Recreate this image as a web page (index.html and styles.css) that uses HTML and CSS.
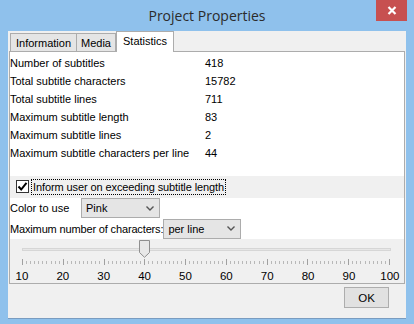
FILE: index.html
```html
<!DOCTYPE html>
<html>
<head>
<meta charset="utf-8">
<link rel="stylesheet" href="styles.css">
</head>
<body>
<div class="window">
  <div class="titlebar">
    <div></div>
    <div class="title">Project Properties</div>
    <div class="caption"><button class="close"><svg width="10" height="9" viewBox="0 0 10 9"><path d="M1.5 1 L8.5 8 M8.5 1 L1.5 8" stroke="#fff" stroke-width="2.2"/></svg></button></div>
  </div>
  <div class="client">
    <div class="tabs">
      <div class="tab">Information</div>
      <div class="tab">Media</div>
      <div class="tab active">Statistics</div>
    </div>
    <div class="panel">
      <div class="stats">
        <div>Number of subtitles</div><div>418</div>
        <div>Total subtitle characters</div><div>15782</div>
        <div>Total subtitle lines</div><div>711</div>
        <div>Maximum subtitle length</div><div>83</div>
        <div>Maximum subtitle lines</div><div>2</div>
        <div>Maximum subtitle characters per line</div><div>44</div>
      </div>
      <div class="checkrow">
        <span class="checkbox"><svg width="11" height="11" viewBox="0 0 11 11"><path d="M1.5 5.5 L4.2 8.5 L9.5 1.8" stroke="#000" stroke-width="2" fill="none"/></svg></span>
        <span class="focus">Inform user on exceeding subtitle length</span>
      </div>
      <div class="formrow">
        <span class="lbl1">Color to use</span>
        <div class="combo c1"><span>Pink</span><svg width="8" height="5" viewBox="0 0 8 5"><path d="M0.5 0.5 L4 4 L7.5 0.5" stroke="#555" stroke-width="1.4" fill="none"/></svg></div>
      </div>
      <div class="formrow r2">
        <span class="lbl2">Maximum number of characters:</span>
        <div class="combo c2"><span>per line</span><svg width="8" height="5" viewBox="0 0 8 5"><path d="M0.5 0.5 L4 4 L7.5 0.5" stroke="#555" stroke-width="1.4" fill="none"/></svg></div>
      </div>
      <div class="slider">
        <div class="track">
          <div class="rail"></div>
          <svg class="thumb" style="left:129px" width="11" height="18" viewBox="0 0 11 18"><path d="M0.5 0.5 H10.5 V12.5 L5.5 17.3 L0.5 12.5 Z" fill="#e8e8e8" stroke="#8f8f8f"/></svg>
        </div>
        <svg class="ticks" width="372" height="8" viewBox="0 0 372 8" id="ticks"></svg>
        <div class="labels">
          <span>10</span><span>20</span><span>30</span><span>40</span><span>50</span><span>60</span><span>70</span><span>80</span><span>90</span><span>100</span>
        </div>
      </div>
    </div>
    <div class="buttons">
      <button class="ok">OK</button>
    </div>
  </div>
</div>
<script>
  var s = document.getElementById('ticks');
  var out = '';
  for (var i = 0; i <= 90; i++) {
    var x = Math.round(2 + i * 367 / 90) + 0.5;
    var major = (i % 10 === 0);
    out += '<line x1="' + x + '" x2="' + x + '" y1="' + (major ? 0 : 2) + '" y2="' + (major ? 6 : 5) + '" stroke="' + (major ? '#a0a0a0' : '#b8b8b8') + '" stroke-width="1"/>';
  }
  s.innerHTML = out;
</script>
</body>
</html>
```
FILE: styles.css
```css
* { box-sizing: border-box; }
html, body { margin: 0; padding: 0; }
body { width: 414px; height: 324px; overflow: hidden; font-family: "Liberation Sans", Arial, sans-serif; font-size: 11px; color: #000; }
.window { width: 414px; height: 324px; background: #8fc1ec; display: flex; flex-direction: column; }
.titlebar { height: 31px; display: grid; grid-template-columns: 1fr auto 1fr; }
.title { font-family: "Open Sans", "Noto Sans", sans-serif; font-size: 14px; color: #2b2b2b; padding-top: 5px; line-height: 22px; }
.caption { display: flex; justify-content: flex-end; padding-right: 7px; }
.close { width: 31px; height: 21px; background: #c75050; border: 0; padding: 0; display: flex; align-items: center; justify-content: center; }
.client { margin: 0 8px; width: 398px; height: 288px; background: #f0f0f0; display: flex; flex-direction: column; border-bottom: 1px solid #7a9cc0; }
.tabs { display: flex; padding: 2px 0 0 2px; height: 21px; align-items: flex-end; }
.tab { height: 19px; border: 1px solid #acacac; border-bottom: 0; background: #e5e5e5; padding: 0 5px; line-height: 18px; margin-right: -1px; }
.tab:nth-child(2) { padding: 0 4px; }
.tab.active { height: 21px; background: #fff; position: relative; z-index: 1; margin-left: 1px; line-height: 18px; padding: 0 6px; }
.panel { margin-left: 1px; width: 396px; height: 233px; background: #fff; border: 1px solid #acacac; margin-top: -1px; padding: 2px 0 0 0; display: flex; flex-direction: column; }
.stats { display: grid; grid-template-columns: 195px auto; grid-auto-rows: 18px; align-items: center; }
.checkrow { margin-top: 14px; height: 22px; background: #f0f0f0; display: flex; align-items: center; padding-left: 6px; }
.checkbox { width: 13px; height: 13px; border: 1px solid #333; background: #fff; display: flex; align-items: center; justify-content: center; margin-right: 3px; }
.focus { outline: 1px dotted #000; padding: 0 1px; line-height: 14px; letter-spacing: -0.1px; }
.formrow { height: 21px; display: flex; align-items: center; }
.formrow.r2 { height: 20px; }
.lbl1 { width: 71px; }
.lbl2 { letter-spacing: -0.15px; }
.combo { height: 20px; border: 1px solid #acacac; background: #e5e5e5; display: flex; align-items: center; justify-content: space-between; padding: 0 5px 0 4px; }
.c1 { width: 79px; }
.c2 { width: 78px; }
.slider { height: 45px; background: #f0f0f0; display: flex; flex-direction: column; }
.track { position: relative; height: 20px; }
.rail { position: absolute; left: 12px; right: 13px; top: 9px; height: 3px; background: #e7e7e7; border: 1px solid #d6d6d6; }
.thumb { position: absolute; top: 1px; }
.ticks { margin-left: 10px; display: block; }
.labels { display: flex; justify-content: space-between; padding: 0 4px 0 2px; margin-top: 3px; font-size: 11.5px; }
.labels span { width: 20px; text-align: center; }
.buttons { display: flex; justify-content: flex-end; padding: 3px 17px 0 0; }
.ok { width: 45px; height: 21px; background: #e1e1e1; border: 1px solid #adadad; font-family: "Liberation Sans", Arial, sans-serif; font-size: 11.5px; padding: 0; color: #000; }
```
